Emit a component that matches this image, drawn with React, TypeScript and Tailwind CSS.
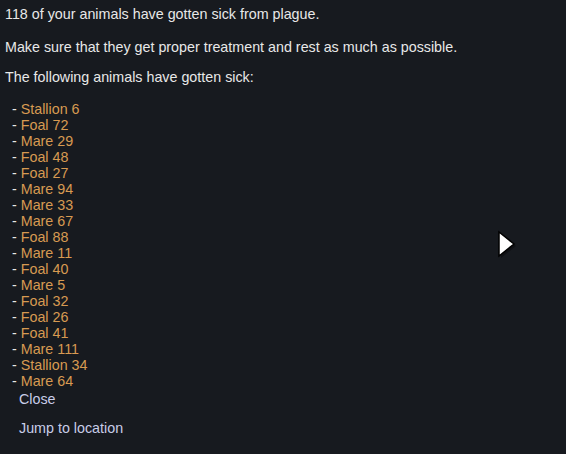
import React from 'react';

const sick = [
  'Stallion 6', 'Foal 72', 'Mare 29', 'Foal 48', 'Foal 27', 'Mare 94', 'Mare 33', 'Mare 67', 'Foal 88',
  'Mare 11', 'Foal 40', 'Mare 5', 'Foal 32', 'Foal 26', 'Foal 41', 'Mare 111', 'Stallion 34', 'Mare 64',
];

export default function App() {
  return (
    <div
      className="relative w-[566px] h-[454px] overflow-hidden bg-[#171a1f] text-[14.3px] leading-4 text-[#e8e8e8]"
      style={{ fontFamily: '"Liberation Sans", Arial, sans-serif' }}
    >
      <div className="px-[5px] pt-[6px]">
        <p>118 of your animals have gotten sick from plague.</p>
        <p className="mt-[17px]">Make sure that they get proper treatment and rest as much as possible.</p>
        <p className="mt-[14px]">The following animals have gotten sick:</p>

        <ul className="mt-4 pl-[7px]">
          {sick.map((name) => (
            <li key={name}>
              - <span className="text-[#d79a52]">{name}</span>
            </li>
          ))}
        </ul>

        <div className="pl-[14px] text-[#c8cde8]">
          <button className="mt-[2px] block leading-4">Close</button>
          <button className="mt-[13px] block leading-4">Jump to location</button>
        </div>
      </div>

      {/* mouse pointer */}
      <svg className="absolute left-[497px] top-[230px]" width="22" height="30" viewBox="0 0 22 30">
        <path d="M4 4 L4 28 L19 16 Z" fill="black" opacity="0.35" />
        <path d="M2 2 L2 26 L17 14 Z" fill="white" stroke="black" strokeWidth="1.5" strokeLinejoin="miter" />
      </svg>
    </div>
  );
}
